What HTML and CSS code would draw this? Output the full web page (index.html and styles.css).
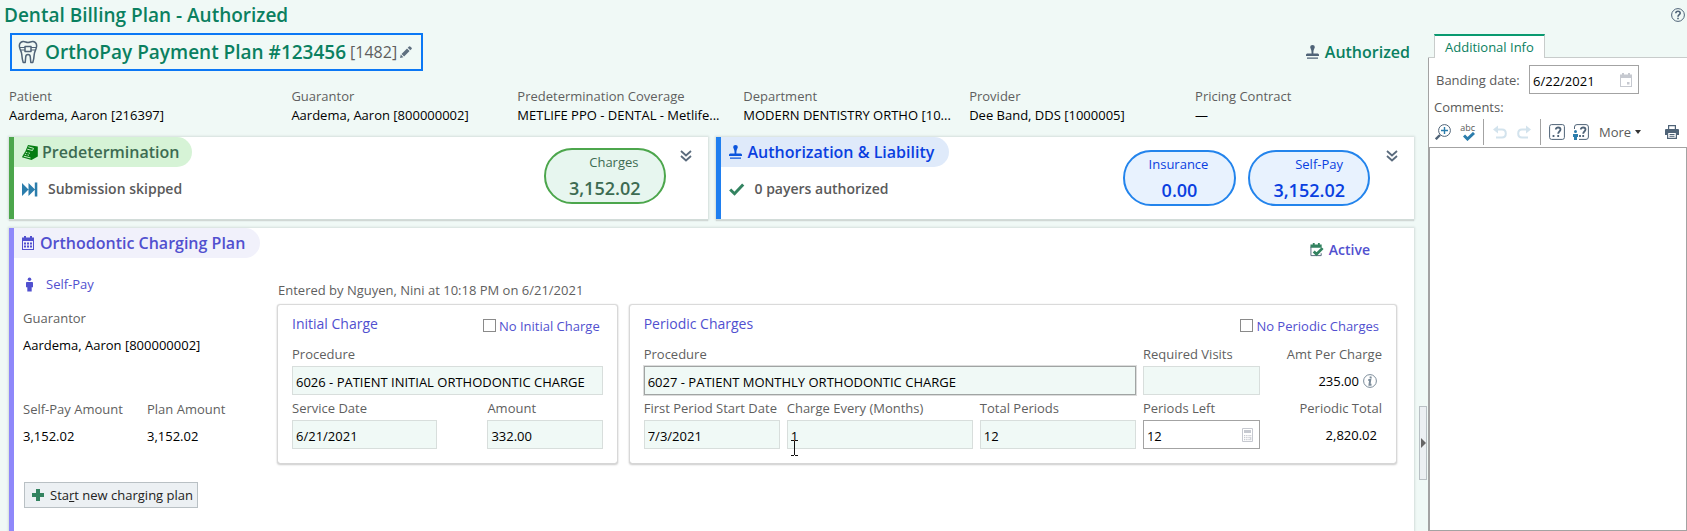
FILE: index.html
```html
<!DOCTYPE html>
<html lang="en">
<head>
<meta charset="utf-8">
<title>Dental Billing Plan - Authorized</title>
<link rel="stylesheet" href="styles.css">
</head>
<body>
<div class="app">
  <main class="main">
    <h1 class="page-title">Dental Billing Plan - Authorized</h1>
    <div class="plan-bar">
      <div class="plan-name">
        <svg class="icon-tooth" viewBox="0 0 20 24" fill="none" stroke="#4f6377" stroke-width="1.500" stroke-linejoin="round">
          <path d="M5 1.500C7 1.200 8 2.500 10 2.500S13 1.200 15 1.500C17.500 2 19 4 18.500 7C18 10 16.500 11.500 16.300 14C16 17.500 15.800 20 14.800 22.500H12.800L12.300 17C12.100 13.800 7.900 13.800 7.700 17L7.200 22.500H5.200C4.200 20 4 17.500 3.700 14C3.500 11.500 2 10 1.500 7C1 4 2.500 2 5 1.500Z"/>
          <path d="M7 6.500H13V11.500H7Z"/><path stroke-width="1" d="M1.500 7.500H7M13 7.500H18.500M2.500 10H7M13 10H17.500"/>
        </svg>
        <h2 class="plan-heading">OrthoPay Payment Plan #123456</h2>
        <span class="plan-id">[1482]</span>
        <button class="bare" aria-label="Edit plan name">
          <svg class="icon-12" viewBox="0 0 12 12" fill="#5f7080"><path d="M0 12L.8 8.600L3.400 11.200ZM1.500 7.900L7 2.400L9.600 5L4.100 10.500ZM7.700 1.700L9 .4Q9.600-.1 10.200 .4L11.600 1.800Q12.100 2.400 11.600 3L10.300 4.300Z"/></svg>
        </button>
      </div>
      <div class="plan-status">
        <svg class="icon-stamp" viewBox="0 0 13 14" fill="#4f6377"><path d="M4.200 2A2.300 2 0 0 1 8.800 2C8.800 3.500 7.400 4 7.400 8.500H12L13 9.500V11H0V9.500L1 8.500H5.600C5.600 4 4.200 3.500 4.200 2ZM1 12.600H12V13.700H1Z"/></svg>
        Authorized
      </div>
    </div>

    <dl class="facts">
      <div><dt>Patient</dt><dd>Aardema, Aaron [216397]</dd></div>
      <div><dt>Guarantor</dt><dd>Aardema, Aaron [800000002]</dd></div>
      <div><dt>Predetermination Coverage</dt><dd>METLIFE PPO - DENTAL - Metlife...</dd></div>
      <div><dt>Department</dt><dd>MODERN DENTISTRY ORTHO [10...</dd></div>
      <div><dt>Provider</dt><dd>Dee Band, DDS [1000005]</dd></div>
      <div><dt>Pricing Contract</dt><dd>—</dd></div>
    </dl>

    <div class="cards">
      <section class="card card-green">
        <div class="card-info">
          <h3 class="tag">
            <svg class="icon-16" viewBox="0 0 16 15"><path fill="#067d12" d="M6 0L15.800 1.500V11.500L9.500 15L0 12.200L.5 11L3.500 6Z"/><path fill="none" stroke="#c4ebc4" stroke-width="1" d="M6.300 1.800L11.500 3.300L10.500 5.500L5.200 4.200M3.800 7.200L5.300 7.600M6.500 7.900L8 8.300M2.800 9.200L4.300 9.600M5.500 9.900L7 10.300M1.800 11.200L8.500 12.900"/></svg>
            Predetermination
          </h3>
          <p class="card-line">
            <svg class="icon-16" viewBox="0 0 16 14" fill="#2b7dac"><path d="M0 .5L6.500 7L0 13.500ZM6.500 .5L13 7L6.500 13.500ZM12.800 0H15.300V14H12.800Z"/></svg>
            Submission skipped
          </p>
        </div>
        <div class="bubbles">
          <div class="bubble"><span class="bubble-label">Charges</span><strong>3,152.02</strong></div>
        </div>
        <button class="bare expand" aria-label="Expand predetermination">
          <svg class="icon-12" viewBox="0 0 12 12" fill="none" stroke="#5a6b7d" stroke-width="1.800"><path d="M1 1L6 5.500L11 1M1 6L6 10.500L11 6"/></svg>
        </button>
      </section>
      <section class="card card-blue">
        <div class="card-info">
          <h3 class="tag">
            <svg class="icon-stamp" viewBox="0 0 13 14" fill="#0b55dd"><path d="M4.200 2A2.300 2 0 0 1 8.800 2C8.800 3.500 7.400 4 7.400 8.500H12L13 9.500V11H0V9.500L1 8.500H5.600C5.600 4 4.200 3.500 4.200 2ZM1 12.600H12V13.700H1Z"/></svg>
            Authorization &amp; Liability
          </h3>
          <p class="card-line">
            <svg class="icon-16" viewBox="0 0 16 14" fill="none" stroke="#338360" stroke-width="3"><path d="M1.200 7L5.500 11.200L14.200 2"/></svg>
            0 payers authorized
          </p>
        </div>
        <div class="bubbles">
          <div class="bubble bubble-narrow"><span class="bubble-label">Insurance</span><strong>0.00</strong></div>
          <div class="bubble"><span class="bubble-label">Self-Pay</span><strong>3,152.02</strong></div>
        </div>
        <button class="bare expand" aria-label="Expand authorization">
          <svg class="icon-12" viewBox="0 0 12 12" fill="none" stroke="#5a6b7d" stroke-width="1.800"><path d="M1 1L6 5.500L11 1M1 6L6 10.500L11 6"/></svg>
        </button>
      </section>
    </div>

    <section class="card card-purple">
      <div class="plan-top">
        <h3 class="tag">
          <svg class="icon-calendar" viewBox="0 0 12 14" fill="#5150cf"><path fill-rule="evenodd" d="M0 1.500H2V0H4V1.500H8V0H10V1.500H12V14H0ZM1 5V13H11V5Z"/><path d="M2 6.500H4V8.500H2ZM5 6.500H7V8.500H5ZM8 6.500H10V8.500H8ZM2 9.500H4V11.500H2ZM5 9.500H7V11.500H5ZM8 9.500H10V11.500H8Z"/></svg>
          Orthodontic Charging Plan
        </h3>
        <div class="active">
          <svg class="icon-14" viewBox="0 0 14 15"><path fill="#338360" d="M0 1.500H2.500V0H4.500V1.500H8V0H10V1.500H12V5H0Z"/><path fill="none" stroke="#4f6377" d="M.5 4V13.500H11.500V11"/><path fill="none" stroke="#338360" stroke-width="3" d="M3.500 9L6.500 12L13 5.500"/></svg>
          Active
        </div>
      </div>
      <div class="plan-body">
        <div class="payer">
          <div class="payer-type">
            <svg class="icon-person" viewBox="0 0 8 16" fill="#5150cf"><circle cx="4" cy="2" r="2"/><path d="M1 5H7Q8 5 8 6V11H6.500V16H1.500V11H0V6Q0 5 1 5Z"/></svg>
            Self-Pay
          </div>
          <dl class="payer-facts">
            <div class="wide"><dt>Guarantor</dt><dd>Aardema, Aaron [800000002]</dd></div>
            <div><dt>Self-Pay Amount</dt><dd>3,152.02</dd></div>
            <div><dt>Plan Amount</dt><dd>3,152.02</dd></div>
          </dl>
          <button class="new-plan">
            <svg class="icon-12" viewBox="0 0 12 12" fill="#338360"><path d="M4 0H8V4H12V8H8V12H4V8H0V4H4Z"/></svg>
            <span>Sta<u>r</u>t new charging plan</span>
          </button>
        </div>
        <div class="charges">
          <p class="entered">Entered by Nguyen, Nini at 10:18 PM on 6/21/2021</p>
          <div class="boxes">
            <div class="box">
              <div class="box-head">
                <h4>Initial Charge</h4>
                <label class="check"><input type="checkbox">No Initial Charge</label>
              </div>
              <div class="initial-grid">
                <label class="field wide">Procedure<input type="text" readonly value="6026 - PATIENT INITIAL ORTHODONTIC CHARGE"></label>
                <label class="field">Service Date<input type="text" readonly value="6/21/2021"></label>
                <label class="field">Amount<input type="text" readonly value="332.00"></label>
              </div>
            </div>
            <div class="box">
              <div class="box-head">
                <h4>Periodic Charges</h4>
                <label class="check"><input type="checkbox">No Periodic Charges</label>
              </div>
              <div class="periodic-grid">
                <label class="field span-3">Procedure<input class="focused" type="text" readonly value="6027 - PATIENT MONTHLY ORTHODONTIC CHARGE"></label>
                <label class="field">Required Visits<input type="text" readonly value=""></label>
                <div class="total"><span>Amt Per Charge</span>
                  <output>235.00
                    <svg class="icon-14" viewBox="0 0 14 14" fill="none" stroke="#7c8c9a"><circle cx="7" cy="7" r="6.400"/><path stroke-width="2" d="M7.800 2.500L7.500 4.500M5.300 6H7.200L6.500 10.700H8.500"/></svg>
                  </output>
                </div>
                <label class="field">First Period Start Date<input type="text" readonly value="7/3/2021"></label>
                <div class="field-holder">
                  <label class="field">Charge Every (Months)<input type="text" readonly value="1"></label>
                  <svg class="pointer" viewBox="0 0 7 16" fill="none" stroke="#111"><path d="M0 .5H3M4 .5H7M3.500 1V15M0 15.500H3M4 15.500H7"/></svg>
                </div>
                <label class="field">Total Periods<input type="text" readonly value="12"></label>
                <label class="field">Periods Left
                  <span class="editable"><input type="text" value="12">
                    <svg class="icon-calc" viewBox="0 0 11 14"><path fill="none" stroke="#c6c9d0" d="M.5 .5H10.500V13.500H.5Z"/><path fill="#c6c9d0" d="M2 2H9V5H2ZM2 7H3.300V8.300H2ZM4.200 7H5.500V8.300H4.200ZM6.400 7H7.700V8.300H6.400ZM8.200 7H9.300V8.300H8.200ZM2 9H3.300V10.300H2ZM4.200 9H5.500V10.300H4.200ZM6.400 9H7.700V10.300H6.400ZM8.200 9H9.300V12.300H8.200ZM2 11H3.300V12.300H2ZM4.200 11H5.500V12.300H4.200ZM6.400 11H7.700V12.300H6.400Z"/></svg>
                  </span>
                </label>
                <div class="total"><span>Periodic Total</span><output>2,820.02</output></div>
              </div>
            </div>
          </div>
        </div>
      </div>
    </section>
  </main>

  <div class="splitter">
    <button class="handle" aria-label="Collapse side panel"><svg class="icon-handle" viewBox="0 0 5 10" fill="#666"><path d="M0 0L5 5L0 10Z"/></svg></button>
  </div>

  <aside class="side">
    <div class="side-top">
      <button class="bare" aria-label="Help">
        <svg class="icon-14" viewBox="0 0 14 14" fill="none" stroke="#4f6377"><circle cx="7" cy="7" r="6.400"/><path stroke-width="1.600" d="M4.800 5.300C4.800 2.500 9.200 2.500 9.200 5.200C9.200 6.700 7 6.600 7 8.700M7 9.700V11.300"/></svg>
      </button>
    </div>
    <div class="tabs"><button class="tab">Additional Info</button></div>
    <div class="side-body">
      <div class="banding">
        <label for="banding">Banding date:</label>
        <span class="editable date">
          <input id="banding" type="text" value="6/22/2021">
          <svg class="icon-calendar" viewBox="0 0 12 14" fill="#c6c9d0"><path fill-rule="evenodd" d="M0 1.500H2V0H4V1.500H8V0H10V1.500H12V14H0ZM1 5V13H11V5Z"/><path d="M7 9H9.500V11.500H7Z"/></svg>
        </span>
      </div>
      <label class="comments-label" for="comments">Comments:</label>
      <div class="toolbar">
        <button class="bare" aria-label="Zoom">
          <svg class="tool" viewBox="0 0 16 16" fill="none" stroke="#4f6377"><circle cx="9.500" cy="6.500" r="5.900"/><path stroke-width="2.400" d="M5 11L.8 15.200"/><path stroke="#2b7dac" stroke-width="1.400" d="M9.500 3V10M6 6.500H13"/></svg>
        </button>
        <button class="bare spell" aria-label="Spelling">abc<svg class="icon-spell" viewBox="0 0 12 9" fill="none" stroke="#2b7dac" stroke-width="3"><path d="M1 3.500L4.500 7L11 1"/></svg></button>
        <span class="sep"></span>
        <button class="bare history" aria-label="Undo">
          <svg class="icon-14" viewBox="0 0 14 13" fill="none" stroke="#d3e3ed" stroke-width="2"><path d="M3 4H9Q12.800 4 12.800 8T9 12H3"/><path fill="#d3e3ed" stroke="none" d="M0 4L5 0V8Z"/></svg>
        </button>
        <button class="bare history" aria-label="Redo">
          <svg class="icon-14" viewBox="0 0 14 13" fill="none" stroke="#d3e3ed" stroke-width="2"><path d="M11 4H5Q1.200 4 1.200 8T5 12H11"/><path fill="#d3e3ed" stroke="none" d="M14 4L9 0V8Z"/></svg>
        </button>
        <span class="sep"></span>
        <button class="bare" aria-label="Insert SmartText">
          <svg class="tool" viewBox="0 0 16 16" fill="none" stroke="#4f6377"><rect x=".6" y=".6" width="14.800" height="14.800" rx="2"/><path stroke-width="1.800" d="M6.800 5.500C6.800 2.800 11.500 2.800 11.500 5.500C11.500 7.500 9.200 7.500 9.200 9.700M9.200 11V13M4.500 11V13"/></svg>
        </button>
        <button class="bare" aria-label="Insert SmartPhrase">
          <svg class="tool" viewBox="0 0 16 16" fill="none" stroke="#4f6377"><path d="M1.500 5V3Q1.500 .6 4 .6H13Q15.400 .6 15.400 3V13Q15.400 15.400 13 15.400H6"/><path stroke-width="1.800" d="M7.800 5.500C7.800 2.800 12.500 2.800 12.500 5.500C12.500 7.500 10.200 7.500 10.200 9.700M10.200 11V13M7 11V13"/><g fill="#2b7dac" stroke="none"><circle cx="2.500" cy="7.500" r="1.500"/><path d="M0 10H5V13H4V16H1V13H0Z"/></g></svg>
        </button>
        <button class="bare more">More<svg class="icon-caret" viewBox="0 0 6 4" fill="#333"><path d="M0 0H6L3 4Z"/></svg></button>
        <button class="bare print" aria-label="Print">
          <svg class="icon-14" viewBox="0 0 14 14"><path fill="#4f6377" fill-rule="evenodd" d="M3 0H11V4H13Q14 4 14 5V10H12V14H2V10H0V5Q0 4 1 4H3ZM4.200 1.200V4H9.800V1.200ZM3.200 8V12.800H10.800V8Z"/><path stroke="#4f6377" d="M4.500 9.500H9.500M4.500 11.300H9.500"/></svg>
        </button>
      </div>
      <textarea class="comments" id="comments"></textarea>
    </div>
  </aside>
</div>
</body>
</html>
```

FILE: styles.css
```css
* {
  box-sizing: border-box;
}

body {
  margin: 0;
  background: #f0f9f6;
  color: #000;
  font: 13px/18px "Segoe UI", "Open Sans", "Noto Sans", sans-serif;
}

h1, h2, h3, h4, p, dl, dd {
  margin: 0;
}

h1, h2, h3, h4 {
  font-weight: 600;
}

svg {
  display: block;
  flex: none;
}

button, input, textarea {
  font: inherit;
  color: inherit;
}

.bare {
  padding: 0;
  border: 0;
  background: none;
}

.app {
  display: flex;
  min-height: 100vh;
}

.main {
  flex: 1;
  min-width: 0;
  display: flex;
  flex-direction: column;
  padding-left: 9px;
}

.page-title {
  margin-left: -5px;
  color: #0a8060;
  font-size: 19px;
  line-height: 30px;
}

.plan-bar {
  display: flex;
  justify-content: space-between;
  align-items: center;
  margin: 3px 4px 0 1px;
}

.plan-name {
  display: flex;
  align-items: center;
  height: 38px;
  padding: 0 9px 0 6px;
  border: 2px solid #0b78f5;
}

.plan-heading {
  margin: 0 4px 0 7px;
  color: #0a8060;
  font-size: 19px;
}

.plan-id {
  margin-right: 3px;
  color: #5f5f5f;
  font-size: 16px;
}

.plan-status {
  display: flex;
  align-items: center;
  gap: 6px;
  color: #0a8060;
  font-size: 16px;
  font-weight: 600;
}

.facts {
  display: grid;
  grid-template-columns: 5fr repeat(5, 4fr);
  margin: 16px -7px 12px 0;
  line-height: 19px;
}

.facts div {
  min-width: 0;
  padding-right: 12px;
}

.facts dd {
  overflow: hidden;
  white-space: nowrap;
}

dt {
  color: #5f5f5f;
}

.cards {
  display: grid;
  grid-template-columns: 1fr 1fr;
  gap: 8px;
  margin-bottom: 9px;
}

.card {
  border-left: 5px solid;
  background: #fff;
  box-shadow: 0 0 2px 1px #d5dfdc, 0 2px 1px #ced5d2;
}

.card-green {
  border-color: #4ca64c;
}

.card-blue {
  border-color: #1f7ff0;
}

.card-purple {
  flex: 1;
  border-color: #8f88fa;
}

.card-green, .card-blue {
  display: flex;
  align-items: flex-start;
  height: 82px;
}

.card-info {
  flex: 1;
}

.tag {
  display: inline-flex;
  align-items: center;
  gap: 6px;
  height: 30px;
  padding: 0 15px 0 8px;
  border-radius: 0 15px 15px 0;
  font-size: 16px;
}

.card-green .tag {
  gap: 4px;
  padding-right: 13px;
  background: #d6f3d6;
  color: #3d6b52;
}

.card-blue .tag {
  background: #dfeafa;
  color: #0a3fe0;
}

.card-purple .tag {
  background: #f1f1fb;
  color: #5150cf;
}

.card-line {
  display: flex;
  align-items: center;
  gap: 10px;
  padding: 13px 0 0 8px;
  color: #5a5a5a;
  font-size: 14px;
  font-weight: 600;
}

.bubbles {
  display: flex;
  gap: 12px;
  padding-top: 11px;
}

.card-blue .bubbles {
  padding-top: 13px;
}

.bubble {
  display: flex;
  flex-direction: column;
  align-items: flex-end;
  width: 122px;
  height: 56px;
  padding: 3px 23px 0 0;
  border: 2px solid #2384ec;
  border-radius: 28px;
  background: #e8f2fe;
  color: #0a3fe0;
}

.bubble-narrow {
  align-items: center;
  width: 113px;
  padding-right: 0;
}

.card-green .bubble {
  border-color: #4ca64c;
  background: #e7f6ef;
  color: #3d6b52;
}

.bubble-label {
  padding-right: 2px;
}

.bubble strong {
  font-size: 18px;
  font-weight: 600;
  line-height: 34px;
}

.expand {
  margin: 13px 16px 0 14px;
}

.card-blue .expand {
  margin-left: 16px;
}

.plan-top {
  display: flex;
  justify-content: space-between;
}

.active {
  display: flex;
  align-items: center;
  gap: 5px;
  padding: 13px 44px 0 0;
  color: #5150cf;
  font-size: 14px;
  font-weight: 600;
}

.plan-body {
  display: flex;
  padding-right: 18px;
}

.payer {
  width: 264px;
  padding: 16px 0 0 9px;
}

.payer-type {
  display: flex;
  align-items: center;
  gap: 13px;
  padding-left: 3px;
  color: #5150cf;
}

.payer-facts {
  display: grid;
  grid-template-columns: 124px 1fr;
  row-gap: 46px;
  padding: 16px 0 37px;
}

.payer-facts dd {
  padding-top: 9px;
}

.wide {
  grid-column: 1 / -1;
}

.new-plan {
  display: flex;
  align-items: center;
  gap: 6px;
  height: 26px;
  margin-left: 1px;
  padding: 0 4px 0 7px;
  border: 1px solid #b9c0c4;
  background: #ecf0f3;
  color: #222;
}

.charges {
  flex: 1;
  min-width: 0;
}

.entered {
  padding: 22px 0 6px;
  color: #5f5f5f;
}

.boxes {
  display: grid;
  grid-template-columns: 339fr 767fr;
  gap: 13px;
}

.box {
  padding: 7px 14px 14px;
  border-radius: 2px;
  box-shadow: 0 0 1px 1px #d8d8d8, 0 1px 2px 1px #ccc;
}

.box-head {
  display: flex;
  justify-content: space-between;
  align-items: center;
  height: 24px;
  margin-bottom: 9px;
  color: #5150cf;
}

.box-head h4 {
  font-size: 14px;
  font-weight: 400;
}

.check {
  display: flex;
  align-items: center;
  gap: 3px;
  padding: 3px 3px 0 0;
}

.check input {
  appearance: none;
  width: 13px;
  height: 13px;
  margin: 0;
  border: 1px solid #8a8a8a;
  background: #fff;
}

.initial-grid, .periodic-grid {
  display: grid;
  row-gap: 4px;
}

.initial-grid {
  grid-template-columns: 145fr 115fr;
  column-gap: 50px;
}

.periodic-grid {
  grid-template-columns: 136fr 186fr 156fr 117fr 115fr;
  column-gap: 7px;
}

.span-3 {
  grid-column: span 3;
}

.field, .total {
  display: flex;
  flex-direction: column;
  gap: 3px;
  min-width: 0;
  color: #5f5f5f;
  white-space: nowrap;
}

.field-holder {
  position: relative;
  min-width: 0;
}

.pointer {
  position: absolute;
  left: 4px;
  bottom: -7px;
  width: 7px;
  height: 16px;
}

.field input {
  width: 100%;
  height: 29px;
  padding: 3px 3px 0;
  border: 1px solid #d8dedc;
  border-radius: 0;
  background: #f0f9f6;
  color: #000;
}

.field .focused {
  border-color: #a0a4a3;
  outline: 1px solid #dcdcdc;
}

.editable {
  display: flex;
  align-items: center;
  height: 29px;
  padding-right: 6px;
  border: 1px solid #a3a3a3;
  background: #fff;
}

.editable input {
  flex: 1;
  min-width: 0;
  width: 0;
  height: 27px;
  padding: 3px 3px 0;
  border: 0;
  background: none;
  color: #000;
}

.total {
  align-items: flex-end;
}

.total output {
  display: flex;
  align-items: center;
  gap: 4px;
  height: 29px;
  padding-right: 5px;
  color: #000;
}

.splitter {
  display: flex;
  width: 14px;
  padding: 406px 1px 0 5px;
}

.handle {
  display: flex;
  align-items: center;
  width: 8px;
  height: 74px;
  padding: 0 0 0 1px;
  border: 1px solid #b9c0c4;
  background: #ecf0f3;
}

.side {
  display: flex;
  flex-direction: column;
  width: 259px;
  color: #5a5a5a;
}

.side-top {
  display: flex;
  justify-content: flex-end;
  height: 34px;
  padding: 8px 2px 0 0;
}

.side-top .bare {
  height: 14px;
}

.tabs {
  display: flex;
  height: 24px;
  padding-left: 6px;
  box-shadow: inset 0 -1px #c8cccb;
}

.tab {
  padding: 0 10px;
  border: solid #c8cccb;
  border-width: 0 1px;
  border-top: 2px solid #0a9a70;
  background: #fff;
  color: #0a8060;
}

.side-body {
  display: flex;
  flex: 1;
  flex-direction: column;
  border-left: 1px solid #a3a3a3;
  background: #fff;
}

.banding {
  display: flex;
  align-items: center;
  justify-content: space-between;
  padding: 7px 48px 4px 7px;
}

.date {
  width: 110px;
}

.comments-label {
  padding-left: 5px;
}

.toolbar {
  display: flex;
  align-items: center;
  gap: 8px;
  height: 26px;
  margin: 3px 0 2px;
  padding: 0 8px 0 6px;
}

.sep {
  align-self: stretch;
  width: 1px;
  background: #a3a3a3;
}

.history {
  padding: 0 1px;
}

.spell {
  display: flex;
  flex-direction: column;
  align-items: flex-end;
  width: 16px;
  font-size: 9px;
  line-height: 9px;
}

.more {
  display: flex;
  align-items: center;
  gap: 4px;
  margin-left: 2px;
}

.print {
  margin-left: auto;
}

.comments {
  display: block;
  flex: 1;
  width: 100%;
  border: 1px solid #a3a3a3;
  background: #fff;
  resize: none;
}

.icon-tooth { width: 20px; height: 24px; }
.icon-12 { width: 12px; height: 12px; }
.icon-stamp { width: 13px; height: 14px; }
.icon-14 { width: 14px; height: 14px; }
.icon-16 { width: 16px; height: 15px; }
.icon-calendar { width: 12px; height: 14px; }
.icon-person { width: 7px; height: 15px; }
.icon-calc { width: 11px; height: 14px; }
.icon-handle { width: 5px; height: 10px; }
.icon-caret { width: 6px; height: 4px; }
.icon-spell { width: 12px; height: 9px; }
.tool { width: 16px; height: 16px; }
```
